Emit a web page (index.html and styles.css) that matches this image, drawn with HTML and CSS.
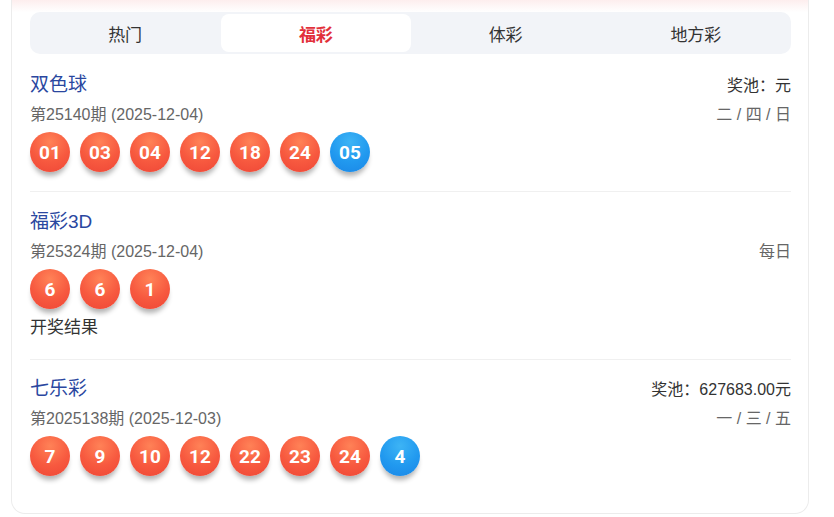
FILE: index.html
```html
<!DOCTYPE html>
<html lang="zh-CN">
<head>
<meta charset="utf-8">
<title>开奖结果</title>
<link rel="stylesheet" href="styles.css">
</head>
<body>
<div class="card">
  <div class="tabs">
    <div class="tab">热门</div>
    <div class="tab active">福彩</div>
    <div class="tab">体彩</div>
    <div class="tab">地方彩</div>
  </div>

  <div class="lottery first">
    <div class="row">
      <div class="title">双色球</div>
      <div class="pool">奖池：元</div>
    </div>
    <div class="row">
      <div class="issue">第25140期 (2025-12-04)</div>
      <div class="days">二 / 四 / 日</div>
    </div>
    <div class="balls">
      <span class="ball red">01</span>
      <span class="ball red">03</span>
      <span class="ball red">04</span>
      <span class="ball red">12</span>
      <span class="ball red">18</span>
      <span class="ball red">24</span>
      <span class="ball blue">05</span>
    </div>
  </div>

  <div class="lottery">
    <div class="row">
      <div class="title">福彩3D</div>
    </div>
    <div class="row">
      <div class="issue">第25324期 (2025-12-04)</div>
      <div class="days">每日</div>
    </div>
    <div class="balls">
      <span class="ball red">6</span>
      <span class="ball red">6</span>
      <span class="ball red">1</span>
    </div>
    <div class="result">开奖结果</div>
  </div>

  <div class="lottery last">
    <div class="row">
      <div class="title">七乐彩</div>
      <div class="pool">奖池：627683.00元</div>
    </div>
    <div class="row">
      <div class="issue">第2025138期 (2025-12-03)</div>
      <div class="days">一 / 三 / 五</div>
    </div>
    <div class="balls">
      <span class="ball red">7</span>
      <span class="ball red">9</span>
      <span class="ball red">10</span>
      <span class="ball red">12</span>
      <span class="ball red">22</span>
      <span class="ball red">23</span>
      <span class="ball red">24</span>
      <span class="ball blue">4</span>
    </div>
  </div>
</div>
</body>
</html>
```

FILE: styles.css
```css
* { box-sizing: border-box; }

html, body {
  margin: 0;
  padding: 0;
  background: #fff;
}

body {
  font-family: "Liberation Sans", "Noto Sans CJK SC", sans-serif;
  color: #333;
  width: 834px;
  height: 517px;
  overflow: hidden;
}

.card {
  margin-left: 11px;
  width: 798px;
  height: 514px;
  border: 1px solid #ececec;
  border-top: none;
  border-radius: 0 0 14px 14px;
  background: linear-gradient(#fdeeee 0px, #fff 12px);
  padding: 12px 17px 0 18px;
}

.tabs {
  display: grid;
  grid-template-columns: repeat(4, 1fr);
  background: #f2f4f8;
  border-radius: 10px;
  height: 42px;
  padding: 2px 0;
}

.tab {
  display: flex;
  align-items: center;
  justify-content: center;
  font-size: 17px;
  color: #333;
  border-radius: 8px;
}

.tab.active {
  background: #fff;
  color: #e2303a;
  font-weight: 700;
  margin: 0 0 0 1px;
}

.lottery {
  padding: 15px 0 19px;
  border-bottom: 1px solid #f0f0f0;
}

.lottery.first { padding-top: 16px; }

.lottery.last { border-bottom: none; padding-top: 14px; }

.row {
  display: flex;
  justify-content: space-between;
  align-items: baseline;
  line-height: 30px;
  height: 30px;
}

.title {
  font-size: 19px;
  color: #2a479f;
}

.pool {
  font-size: 16px;
  color: #333;
}

.issue {
  font-size: 16px;
  color: #666;
}

.days {
  font-size: 16px;
  color: #666;
}

.balls {
  display: flex;
  gap: 10px;
  margin-top: 2px;
}

.ball {
  width: 40px;
  height: 40px;
  border-radius: 50%;
  display: flex;
  align-items: center;
  justify-content: center;
  color: #fff;
  font-family: "Roboto", "Noto Sans", sans-serif;
  font-weight: 700;
  font-size: 19px;
  box-shadow: 0 6px 5px -2px rgba(0, 0, 0, 0.3);
}

.ball.red {
  background: radial-gradient(circle at 50% 25%, #ff8257 0%, #f7593f 55%, #ee4636 100%);
}

.ball.blue {
  background: radial-gradient(circle at 50% 25%, #3db4f5 0%, #2199ef 55%, #1a86e6 100%);
}

.result {
  font-size: 17px;
  line-height: 24px;
  margin-top: 7px;
  color: #333;
}
```
